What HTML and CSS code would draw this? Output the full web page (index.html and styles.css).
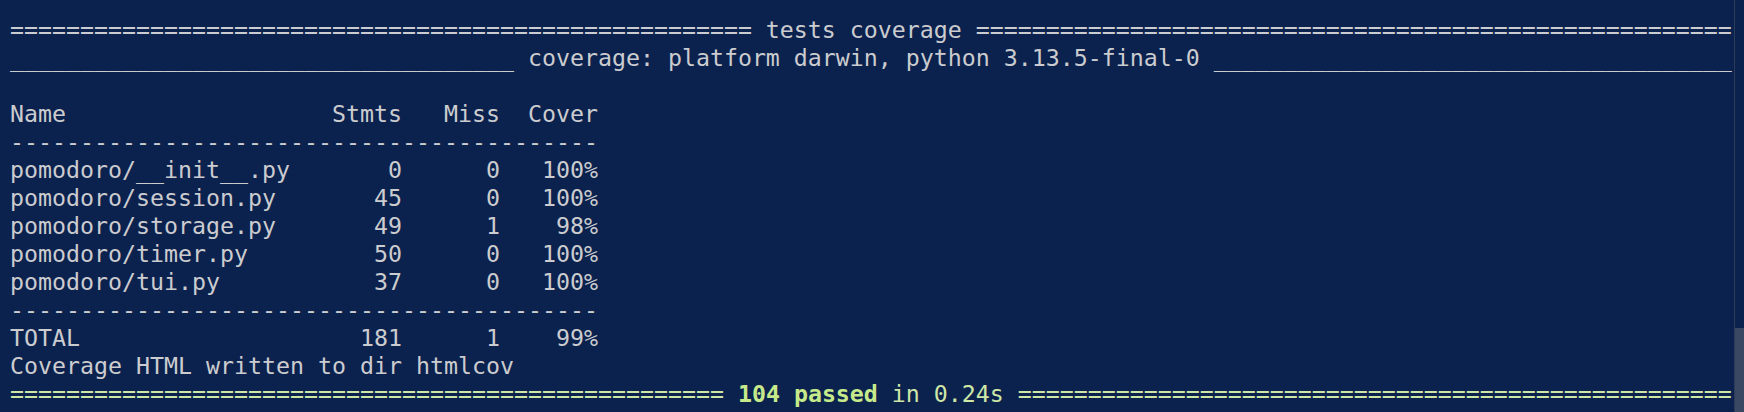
FILE: index.html
```html
<!DOCTYPE html>
<html lang="en">
<head>
<meta charset="utf-8">
<title>tests coverage</title>
<link rel="stylesheet" href="styles.css">
</head>
<body>
<main class="term">
<div class="ln">===================================================== tests coverage ======================================================</div>
<div class="ln">____________________________________ coverage: platform darwin, python 3.13.5-final-0 _____________________________________</div>
<div class="ln"> </div>
<div class="ln">Name                   Stmts   Miss  Cover</div>
<div class="ln">------------------------------------------</div>
<div class="ln">pomodoro/__init__.py       0      0   100%</div>
<div class="ln">pomodoro/session.py       45      0   100%</div>
<div class="ln">pomodoro/storage.py       49      1    98%</div>
<div class="ln">pomodoro/timer.py         50      0   100%</div>
<div class="ln">pomodoro/tui.py           37      0   100%</div>
<div class="ln">------------------------------------------</div>
<div class="ln">TOTAL                    181      1    99%</div>
<div class="ln">Coverage HTML written to dir htmlcov</div>
<div class="ln pass">=================================================== <b class="strong">104 passed</b> in 0.24s ===================================================</div>
</main>
<div class="scrollbar"><div class="thumb"></div></div>
</body>
</html>
```
FILE: styles.css
```css
html, body {
  margin: 0;
  padding: 0;
  background: #0b224e;
  width: 1744px;
  height: 412px;
  overflow: hidden;
}
.term {
  padding: 16px 0 0 10px;
  font-family: "DejaVu Sans Mono", "Liberation Mono", monospace;
  font-size: 23.254px;
  line-height: 28px;
  color: #cbcccf;
}
.ln {
  white-space: pre;
  height: 28px;
}
.pass {
  color: #cfe7a6;
}
.strong {
  font-weight: bold;
  color: #c6ea8a;
}
.scrollbar {
  position: absolute;
  top: 0;
  left: 1734px;
  width: 10px;
  height: 412px;
  border-left: 1px solid #2c3b58;
  box-sizing: border-box;
}
.thumb {
  position: absolute;
  left: 0;
  right: 0;
  top: 328px;
  bottom: 0;
  background: #3a4864;
}
```
